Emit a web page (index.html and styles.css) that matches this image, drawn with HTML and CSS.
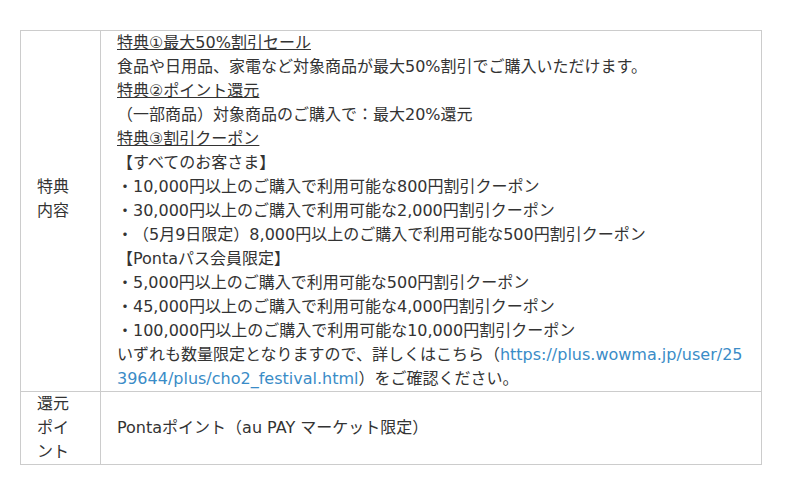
FILE: index.html
```html
<!DOCTYPE html>
<html lang="ja">
<head>
<meta charset="utf-8">
<link rel="stylesheet" href="styles.css">
</head>
<body>
<table class="info">
  <tr>
    <th class="label label-raised">特典内容</th>
    <td class="body">
      <div class="u">特典①最大50%割引セール</div>
      <div>食品や日用品、家電など対象商品が最大50%割引でご購入いただけます。</div>
      <div class="u">特典②ポイント還元</div>
      <div>（一部商品）対象商品のご購入で：最大20%還元</div>
      <div class="u">特典③割引クーポン</div>
      <div>【すべてのお客さま】</div>
      <div>・10,000円以上のご購入で利用可能な800円割引クーポン</div>
      <div>・30,000円以上のご購入で利用可能な2,000円割引クーポン</div>
      <div>・（5月9日限定）8,000円以上のご購入で利用可能な500円割引クーポン</div>
      <div>【Pontaパス会員限定】</div>
      <div>・5,000円以上のご購入で利用可能な500円割引クーポン</div>
      <div>・45,000円以上のご購入で利用可能な4,000円割引クーポン</div>
      <div>・100,000円以上のご購入で利用可能な10,000円割引クーポン</div>
      <div class="note">いずれも数量限定となりますので、詳しくはこちら（<a class="link" href="#">https://plus.wowma.jp/user/2539644/plus/cho2_festival.html</a>）をご確認ください。</div>
    </td>
  </tr>
  <tr>
    <th class="label">還元ポイント</th>
    <td class="body">Pontaポイント（au PAY マーケット限定）</td>
  </tr>
</table>
</body>
</html>
```
FILE: styles.css
```css
html, body {
  margin: 0;
  padding: 0;
  background: #fff;
}
body {
  padding: 30px 20px;
  font-family: "DejaVu Sans", "Noto Sans CJK JP", sans-serif;
  font-size: 16px;
  line-height: 24px;
  color: #333;
  text-spacing-trim: space-all;
}
.info {
  border-collapse: collapse;
  width: 742px;
}
.info th, .info td {
  border: 1px solid #ccc;
  padding: 0 16px;
  vertical-align: middle;
  text-align: left;
  font-weight: normal;
}
.info .label {
  width: 47px;
}
.info .label-raised {
  padding-bottom: 24px;
}
.u {
  text-decoration: underline;
}
.note {
  word-break: break-all;
}
.link {
  color: #3a8cc7;
  text-decoration: none;
}
```
